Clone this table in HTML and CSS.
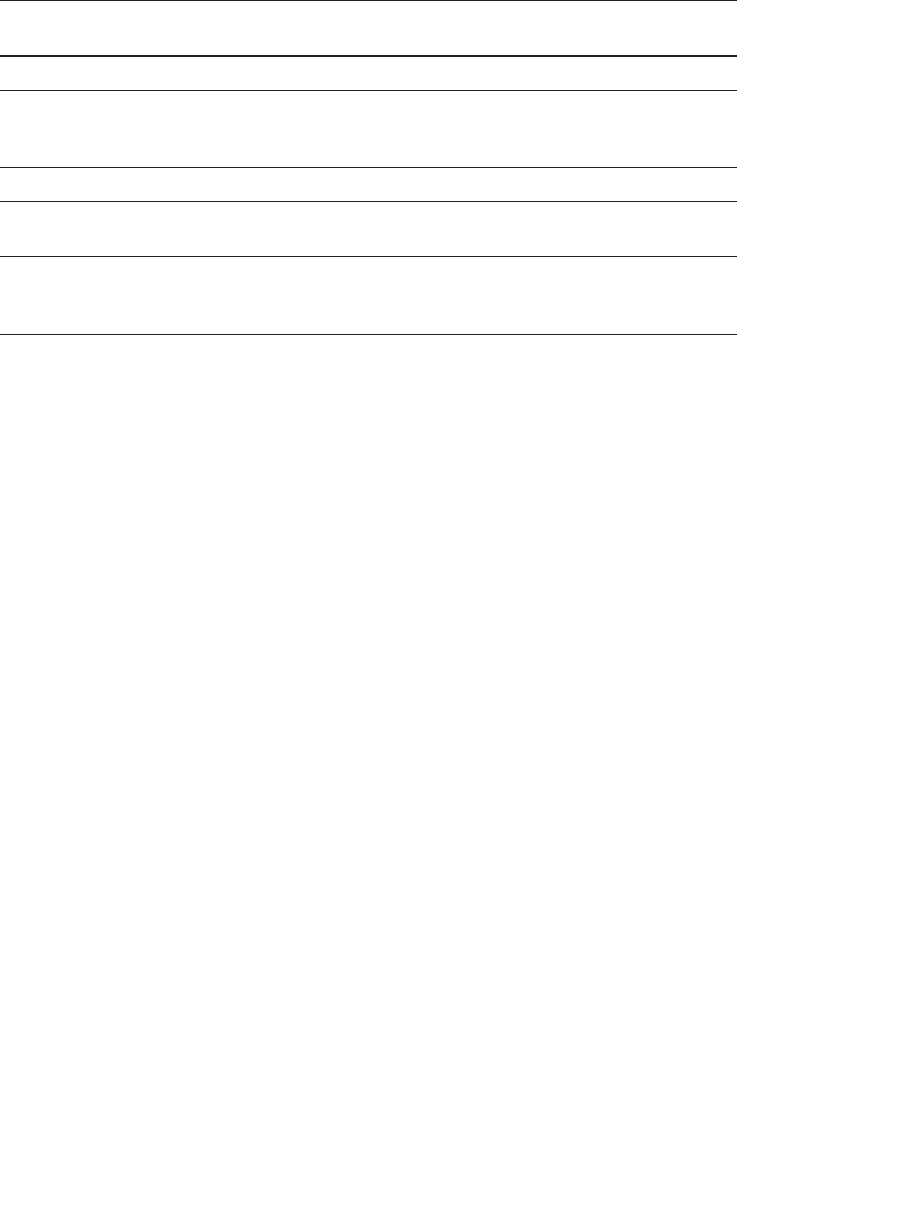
FILE: index.html
```html
<!DOCTYPE html>
<html lang="en">
<head>
  <meta charset="UTF-8">
  <title>Table</title>
  <link rel="stylesheet" href="styles.css">
</head>
<body>
  <div class="table">
    <div class="row head"></div>
    <div class="row r-33"></div>
    <div class="row r-76"></div>
    <div class="row r-33"></div>
    <div class="row r-54"></div>
    <div class="row r-77"></div>
  </div>
</body>
</html>
```
FILE: styles.css
```css
* {
  margin: 0;
  padding: 0;
  box-sizing: border-box;
}

body {
  background: #fff;
  font-family: 'Liberation Sans', Arial, sans-serif;
}

.table {
  width: 737px;
  border-top: 1px solid #222;
}

.row {
  border-bottom: 1px solid #222;
}

.head {
  height: 56px;
  border-bottom: 2px solid #222;
}

.r-33 { height: 34px; }
.r-76 { height: 77px; }
.r-54 { height: 55px; }
.r-77 { height: 78px; }
```
